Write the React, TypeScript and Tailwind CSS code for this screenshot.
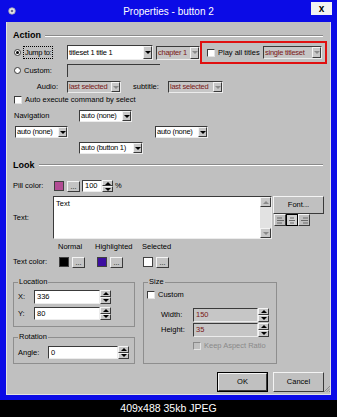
import React from "react";

const sunken =
  "border border-t-[#3a3a3a] border-l-[#3a3a3a] border-b-[#ececec] border-r-[#ececec]";
const raised =
  "border border-t-[#f4f4f4] border-l-[#f4f4f4] border-b-[#3a3a3a] border-r-[#3a3a3a]";

const Arrow = ({ up = false, dim = false }: { up?: boolean; dim?: boolean }) => (
  <span
    className={`block w-0 h-0 border-l-[3px] border-r-[3px] border-l-transparent border-r-transparent ${
      up ? "border-b-[3px]" : "border-t-[3px]"
    } ${
      dim
        ? up
          ? "border-b-[#8a8a8a]"
          : "border-t-[#8a8a8a]"
        : up
        ? "border-b-black"
        : "border-t-black"
    }`}
  />
);

const Select = ({
  w,
  text,
  dim = false,
  h = "h-[12px]",
  cls = "",
}: {
  w: string;
  text: string;
  dim?: boolean;
  h?: string;
  cls?: string;
}) => (
  <div
    className={`${w} ${h} ${cls} ${sunken} flex items-stretch ${
      dim ? "bg-[#c6c6c6] text-[#7a1616]" : "bg-white"
    }`}
  >
    <span className="flex-1 flex items-center pl-[1px] whitespace-nowrap overflow-hidden tracking-[-0.25px]">
      {text}
    </span>
    <span className={`w-[9px] ${raised} bg-[#c8c8c8] flex items-center justify-center`}>
      <Arrow dim={dim} />
    </span>
  </div>
);

const Spin = ({ h = "h-[12px]" }: { h?: string }) => (
  <div className={`w-[11px] ${h} flex flex-col`}>
    <span className={`flex-1 ${raised} bg-[#c8c8c8] flex items-center justify-center`}>
      <Arrow up />
    </span>
    <span className={`flex-1 ${raised} bg-[#c8c8c8] flex items-center justify-center`}>
      <Arrow />
    </span>
  </div>
);

const Dots = ({ cls = "" }: { cls?: string }) => (
  <span
    className={`w-[13px] h-[11px] ${cls} ${raised} bg-[#c4c4c4] flex items-end justify-center text-[7px] leading-[8px]`}
  >
    ...
  </span>
);

const Check = ({ dim = false }: { dim?: boolean }) => (
  <span
    className={`block w-[8px] h-[8px] border ${
      dim
        ? "border-t-[#8a8a8a] border-l-[#8a8a8a] border-b-[#e4e4e4] border-r-[#e4e4e4] bg-transparent"
        : "border-t-[#3a3a3a] border-l-[#3a3a3a] border-b-[#e4e4e4] border-r-[#e4e4e4] bg-white"
    }`}
  />
);

const Radio = ({ checked = false }: { checked?: boolean }) => (
  <span className="w-[7px] h-[7px] rounded-full bg-white border border-[#3a3a3a] flex items-center justify-center">
    {checked && <span className="block w-[3px] h-[3px] rounded-full bg-black" />}
  </span>
);

const Header = ({ title, cls }: { title: string; cls: string }) => (
  <div className={`flex items-center pl-[6px] pr-[7px] ${cls}`}>
    <span className="font-bold text-[9px]">{title}</span>
    <span className="flex-1 ml-[4px] h-[2px] border-t border-t-[#8a8a8a] border-b border-b-white" />
  </div>
);

const Lines = ({ align }: { align: "l" | "c" | "r" }) => {
  const xs = align === "l" ? [1, 1, 1] : align === "c" ? [2, 1, 2] : [3, 1, 3];
  const ws = align === "c" ? [4, 6, 4] : [5, 7, 5];
  return (
    <svg width="8" height="7" viewBox="0 0 8 7">
      {[1, 3.5, 6].map((y, i) => (
        <line key={i} x1={xs[i]} y1={y} x2={xs[i] + ws[i]} y2={y} stroke="#6a6a6a" strokeWidth="1" />
      ))}
    </svg>
  );
};

export default function App() {
  return (
    <div className="w-[337px] h-[417px] bg-black flex flex-col font-['Liberation_Sans',Arial,sans-serif] text-black">
      <div className="h-[400px] bg-[#0b0be6] flex flex-col">
        {/* title bar */}
        <div className="h-[22px] flex items-center text-white">
          <div className="w-[26px] pl-[8px] flex items-center">
            <svg width="8" height="8" viewBox="0 0 8 8">
              <circle cx="4" cy="4" r="3.3" fill="#e8e8e8" stroke="#9a9ab0" strokeWidth="0.8" />
              <circle cx="4" cy="4" r="1.3" fill="#6a6a90" />
            </svg>
          </div>
          <div className="flex-1 text-center text-[10px]">Properties - button 2</div>
          <div className="w-[26px] self-start pt-[2px]">
            <span className="w-[21px] h-[13px] bg-[#f2f2f2] flex items-center justify-center text-black font-bold text-[10px] leading-none">
              x
            </span>
          </div>
        </div>

        {/* body */}
        <div className="mx-[6px] h-[373px] bg-[#c0c0c0] border-x border-b border-[#e2e2e2] flex flex-col text-[7.5px] leading-none">
          <Header title="Action" cls="mt-[8px] h-[11px]" />

          <div className="flex items-center h-[23px]">
            <span className="ml-[7px]">
              <Radio checked />
            </span>
            <div className="w-[46px] flex">
              <span className="ml-[2px] w-[30px] h-[13px] border border-dotted border-black flex items-center pl-[1px] whitespace-nowrap tracking-[-0.3px]">
                Jump to:
              </span>
            </div>
            <Select w="w-[86px]" h="h-[15px]" text="titleset 1 title 1" />
            <Select cls="ml-[3px]" w="w-[44px]" h="h-[14px]" text="chapter 1" dim />
            <div className="w-[127px] h-[23px] border-2 border-[#e01010] flex items-center pl-[5px]">
              <Check />
              <span className="ml-[3px] whitespace-nowrap">Play all titles</span>
              <Select cls="ml-auto mr-[3px]" w="w-[59px]" h="h-[13px]" text="single titleset" dim />
            </div>
          </div>

          <div className="flex items-center h-[13px]">
            <span className="ml-[7px]">
              <Radio />
            </span>
            <span className="w-[46px] pl-[3px]">Custom:</span>
            <div className="w-[93px] h-[13px] border-t border-l border-t-[#3a3a3a] border-l-[#3a3a3a]" />
          </div>

          <div className="flex items-center h-[12px] mt-[4px]">
            <span className="w-[51px] text-right">Audio:</span>
            <Select cls="ml-[9px]" w="w-[54px]" text="last selected" dim />
            <span className="ml-[12px] w-[35px]">subtitle:</span>
            <Select w="w-[55px]" text="last selected" dim />
          </div>

          <div className="flex items-center h-[12px] mt-[1px]">
            <span className="ml-[7px]">
              <Check />
            </span>
            <span className="ml-[3px]">Auto execute command by select</span>
          </div>

          <div className="flex items-center h-[12px] mt-[4px]">
            <span className="w-[72px] pl-[7px]">Navigation</span>
            <Select w="w-[53px]" text="auto (none)" />
          </div>

          <div className="flex items-center h-[12px] mt-[4px]">
            <Select cls="ml-[8px]" w="w-[53px]" text="auto (none)" />
            <Select cls="ml-[87px]" w="w-[53px]" text="auto (none)" />
          </div>

          <div className="flex items-center h-[12px] mt-[4px]">
            <Select cls="ml-[72px]" w="w-[64px]" text="auto (button 1)" />
          </div>

          <Header title="Look" cls="mt-[5px] h-[12px]" />

          <div className="flex items-center h-[12px] mt-[9px] pl-[6px]">
            <span className="w-[41px]">Pill color:</span>
            <span className="w-[10px] h-[10px] bg-[#b24c94] border border-[#404040]" />
            <Dots cls="ml-[3px]" />
            <span className={`ml-[2px] w-[20px] h-[12px] bg-white ${sunken} flex items-center pl-[2px]`}>
              100
            </span>
            <Spin h="h-[12px]" />
            <span className="ml-[2px]">%</span>
          </div>

          <div className="flex h-[44px] mt-[4px] pl-[6px]">
            <span className="w-[40px] self-center">Text:</span>
            <div className={`w-[219px] h-[43px] bg-white ${sunken} flex`}>
              <span className="flex-1 pl-[2px] pt-[3px]">Text</span>
              <div className="w-[11px] flex flex-col bg-[#e2e2e2]">
                <span className={`h-[10px] ${raised} bg-[#c8c8c8] flex items-center justify-center`}>
                  <Arrow up dim />
                </span>
                <span className="flex-1" />
                <span className={`h-[10px] ${raised} bg-[#c8c8c8] flex items-center justify-center`}>
                  <Arrow dim />
                </span>
              </div>
            </div>
            <div className="ml-[1px] w-[51px] flex flex-col">
              <span className={`h-[18px] ${raised} bg-[#c0c0c0] flex items-center justify-center`}>
                Font...
              </span>
              <div className="flex ml-[1px]">
                <span className={`w-[12px] h-[12px] ${raised} flex items-center justify-center`}>
                  <Lines align="l" />
                </span>
                <span className="w-[12px] h-[12px] border border-black bg-[#d0d0d0] flex items-center justify-center">
                  <Lines align="c" />
                </span>
                <span className={`w-[12px] h-[12px] ${raised} flex items-center justify-center`}>
                  <Lines align="r" />
                </span>
              </div>
            </div>
          </div>

          <div className="flex items-center h-[10px] mt-[2px] pl-[51px]">
            <span className="w-[37px]">Normal</span>
            <span className="w-[47px]">Highlighted</span>
            <span>Selected</span>
          </div>

          <div className="flex items-center h-[12px] mt-[4px] pl-[6px]">
            <span className="w-[46px]">Text color:</span>
            <span className="w-[10px] h-[10px] bg-black border border-[#404040]" />
            <Dots cls="ml-[3px]" />
            <span className="ml-[12px] w-[10px] h-[10px] bg-[#3c0ea0] border border-[#404040]" />
            <Dots cls="ml-[3px]" />
            <span className="ml-[20px] w-[10px] h-[10px] bg-white border border-[#404040]" />
            <Dots cls="ml-[3px]" />
          </div>

          <div className="flex items-start mt-[9px]">
            <div className="ml-[6px] w-[122px] flex flex-col">
              <fieldset className="border border-[#8e8e8e] pb-[6px]">
                <legend className="ml-[4px] px-[1px] leading-[10px]">Location</legend>
                <div className="flex items-center h-[14px] mt-[3px] pl-[4px]">
                  <span className="w-[16px]">X:</span>
                  <span className={`w-[66px] h-[14px] bg-white ${sunken} flex items-center pl-[2px]`}>336</span>
                  <Spin h="h-[14px]" />
                </div>
                <div className="flex items-center h-[13px] mt-[3px] pl-[4px]">
                  <span className="w-[16px]">Y:</span>
                  <span className={`w-[66px] h-[13px] bg-white ${sunken} flex items-center pl-[2px]`}>80</span>
                  <Spin h="h-[13px]" />
                </div>
              </fieldset>
              <fieldset className="mt-[5px] border border-[#8e8e8e] pb-[4px]">
                <legend className="ml-[4px] px-[1px] leading-[10px]">Rotation</legend>
                <div className="flex items-center h-[13px] mt-[4px] pl-[4px]">
                  <span className="w-[30px]">Angle:</span>
                  <span className={`w-[70px] h-[13px] bg-white ${sunken} flex items-center pl-[2px]`}>0</span>
                  <Spin h="h-[13px]" />
                </div>
              </fieldset>
            </div>

            <fieldset className="ml-[8px] w-[134px] border border-[#8e8e8e] pb-[12px]">
              <legend className="ml-[4px] px-[1px] leading-[10px]">Size</legend>
              <div className="flex items-center h-[10px] mt-[3px] pl-[3px]">
                <Check />
                <span className="ml-[3px]">Custom</span>
              </div>
              <div className="flex items-center h-[14px] mt-[8px] pl-[17px]">
                <span className="w-[32px]">Width:</span>
                <span className={`w-[65px] h-[14px] bg-[#c6c6c6] text-[#7a1616] ${sunken} flex items-center pl-[2px]`}>
                  150
                </span>
                <Spin h="h-[14px]" />
              </div>
              <div className="flex items-center h-[14px] mt-[1px] pl-[17px]">
                <span className="w-[32px]">Height:</span>
                <span className={`w-[65px] h-[14px] bg-[#c6c6c6] text-[#7a1616] ${sunken} flex items-center pl-[2px]`}>
                  35
                </span>
                <Spin h="h-[14px]" />
              </div>
              <div className="flex items-center h-[10px] mt-[4px] pl-[49px] text-[#8a8a8a]">
                <Check dim />
                <span className="ml-[3px]">Keep Aspect Ratio</span>
              </div>
            </fieldset>
          </div>

          <div className="flex justify-end h-[20px] mt-[8px]">
            <span className="w-[51px] h-[20px] border border-black flex">
              <span className={`flex-1 ${raised} flex items-center justify-center`}>OK</span>
            </span>
            <span className={`ml-[5px] w-[51px] h-[20px] ${raised} flex items-center justify-center`}>
              Cancel
            </span>
            <span className="w-[6px] self-end flex">
              <svg width="6" height="6" viewBox="0 0 6 6">
                <line x1="6" y1="0" x2="0" y2="6" stroke="#8a8a8a" />
                <line x1="6" y1="2.5" x2="2.5" y2="6" stroke="#8a8a8a" />
                <line x1="6" y1="5" x2="5" y2="6" stroke="#8a8a8a" />
              </svg>
            </span>
          </div>
        </div>
      </div>
      <div className="flex-1 flex items-center justify-center text-white text-[10.5px]">
        409x488 35kb JPEG
      </div>
    </div>
  );
}
